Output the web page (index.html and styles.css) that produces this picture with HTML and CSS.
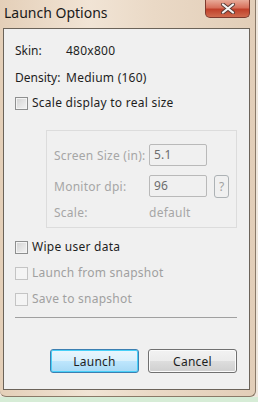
FILE: index.html
```html
<!DOCTYPE html>
<html lang="en">
<head>
    <meta charset="UTF-8">
    <title>Launch Options</title>
    <link rel="stylesheet" href="styles.css">
</head>
<body>
    <div class="window">
        <!-- Title bar -->
        <div class="titlebar">
            <span class="title">Launch Options</span>
            <div class="close-btn">
                <svg width="16" height="11" viewBox="0 0 16 11">
                    <path d="M3 1.5 L13 9.5 M13 1.5 L3 9.5" stroke="#5a3a34" stroke-width="4" stroke-linecap="round"/>
                    <path d="M3 1.5 L13 9.5 M13 1.5 L3 9.5" stroke="#f4f4f4" stroke-width="2.2" stroke-linecap="round"/>
                </svg>
            </div>
        </div>

        <!-- Client area -->
        <div class="client">
            <div class="row info-skin"><span class="key">Skin:</span><span>480x800</span></div>
            <div class="row info-density"><span class="key">Density:</span><span>Medium (160)</span></div>

            <label class="row check check-scale"><span class="box"></span>Scale display to real size</label>

            <div class="group">
                <div class="field field-size">
                    <span class="field-label">Screen Size (in):</span>
                    <span class="input">5.1</span>
                </div>
                <div class="field field-dpi">
                    <span class="field-label">Monitor dpi:</span>
                    <span class="input">96</span>
                    <span class="help">?</span>
                </div>
                <div class="field field-scale">
                    <span class="field-label">Scale:</span>
                    <span>default</span>
                </div>
            </div>

            <label class="row check check-wipe"><span class="box"></span>Wipe user data</label>
            <label class="row check disabled check-launch"><span class="box"></span>Launch from snapshot</label>
            <label class="row check disabled check-save"><span class="box"></span>Save to snapshot</label>

            <div class="separator"></div>

            <div class="buttons">
                <button class="btn btn-default">Launch</button>
                <button class="btn">Cancel</button>
            </div>
        </div>
    </div>
</body>
</html>
```

FILE: styles.css
```css
body {
    margin: 0;
    padding: 0;
    width: 258px;
    height: 402px;
    background: linear-gradient(180deg, #efe7dd 397px, #d6ecd6 397px);
    font-family: "Noto Sans", "Segoe UI", sans-serif;
    font-size: 12px;
    letter-spacing: 0.25px;
    color: #1e1e1e;
    overflow: hidden;
}

.window {
    width: 256px;
    height: 397px;
    box-sizing: border-box;
    padding: 0 5px 6px 3px;
    background: linear-gradient(90deg, #e4cfb8 0%, #f1e4d5 35%, #ead9c6 60%, #e2ceb8 100%);
    border-right: 1px solid #8a7a68;
    border-bottom: 1px solid #8a7a68;
    border-radius: 0 0 6px 6px;
    display: flex;
    flex-direction: column;
}

/* Title bar */
.titlebar {
    height: 28px;
    display: flex;
    align-items: flex-start;
    justify-content: space-between;
}

.title {
    margin-top: 4px;
    margin-left: 1px;
    font-size: 14px;
    line-height: 18px;
    letter-spacing: 0;
    color: #1a1a1a;
}

.close-btn {
    width: 45px;
    height: 18px;
    box-sizing: border-box;
    border: 1px solid #7d3a2e;
    border-top: none;
    border-radius: 0 0 5px 5px;
    background: linear-gradient(180deg, #e8aa98 0%, #d7715c 45%, #c0402a 55%, #cf6a4e 100%);
    display: flex;
    justify-content: center;
    align-items: center;
}

/* Client area */
.client {
    flex: 1;
    background-color: #f0f0f0;
    border: 1px solid #6b6359;
    padding: 12px 12px 0 11px;
    display: flex;
    flex-direction: column;
}

.row {
    height: 20px;
    line-height: 20px;
    display: flex;
    align-items: center;
}

.key {
    width: 51px;
    flex-shrink: 0;
    letter-spacing: 0;
}

.info-density {
    margin-top: 7px;
}

.check-scale {
    margin-top: 5px;
}

.check .box {
    width: 11px;
    height: 11px;
    margin-right: 4px;
    border: 1px solid #8e8f8f;
    background: linear-gradient(135deg, #d2d2d2 0%, #f4f4f4 100%);
    box-shadow: inset 0 0 0 1px #f4f4f4;
}

.check.disabled {
    color: #a0a0a0;
}

.check.disabled .box {
    border-color: #c4c4c4;
    background: #f4f4f4;
    box-shadow: none;
}

/* Scale settings group */
.group {
    margin: 17px 0 0 31px;
    height: 98px;
    box-sizing: border-box;
    border: 1px solid #dcdcdc;
    padding: 13px 0 0 7px;
    color: #a6a6a6;
}

.field {
    display: flex;
    align-items: center;
    height: 22px;
}

.field-label {
    width: 95px;
}

.input {
    width: 58px;
    height: 22px;
    box-sizing: border-box;
    border: 1px solid #b9b9b9;
    border-radius: 2px;
    padding-left: 4px;
    line-height: 20px;
    color: #6d6d6d;
}

.field-dpi {
    margin-top: 9px;
}

.help {
    margin-left: 7px;
    width: 15px;
    height: 23px;
    box-sizing: border-box;
    border: 1px solid #adb2b5;
    border-radius: 3px;
    text-align: center;
    line-height: 21px;
    letter-spacing: 0;
    color: #a0a0a0;
}

.field-scale {
    margin-top: 5px;
    height: 20px;
}

.check-wipe {
    margin-top: 9px;
}

.check-launch,
.check-save {
    margin-top: 6px;
}

.separator {
    margin-top: 8px;
    height: 1px;
    background-color: #a0a0a0;
}

/* Dialog buttons */
.buttons {
    margin-top: 31px;
    display: flex;
    justify-content: flex-end;
    gap: 9px;
}

.btn {
    width: 89px;
    height: 24px;
    font-family: "Noto Sans", "Segoe UI", sans-serif;
    font-size: 12px;
    letter-spacing: 0.25px;
    color: #1e1e1e;
    border: 1px solid #707070;
    border-radius: 3px;
    background: linear-gradient(180deg, #f2f2f2 0%, #ebebeb 50%, #dddddd 51%, #cfcfcf 100%);
    box-shadow: inset 0 0 0 1px #fbfbfb;
    padding: 0;
}

.btn-default {
    border-color: #3c7fb1;
    background: linear-gradient(180deg, #eaf6fd 0%, #d9f0fc 50%, #bee6fd 51%, #a7d9f5 100%);
    box-shadow: inset 0 0 0 1px #48d0f8;
}
```
